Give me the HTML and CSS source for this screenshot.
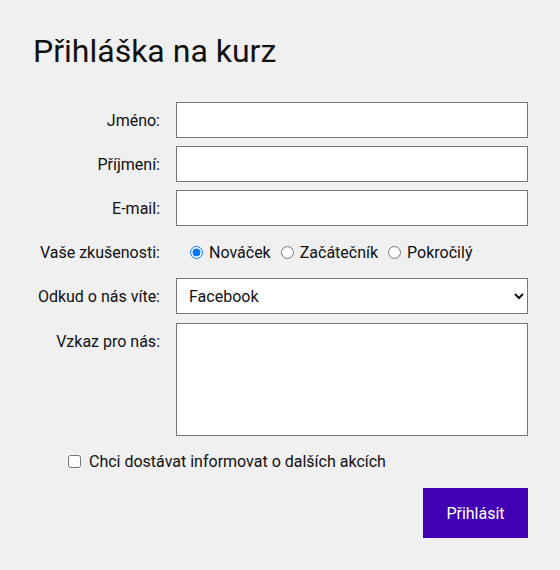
FILE: index.html
```html
<!DOCTYPE html>
<html lang="cs">
<head>
<meta charset="utf-8">
<title>Přihláška na kurz</title>
<link rel="stylesheet" href="styles.css">
</head>
<body>
<main class="page">
  <h1 class="title">Přihláška na kurz</h1>
  <form class="form">
    <div class="grid">
      <label class="label" for="jmeno">Jméno:</label>
      <input class="field" type="text" id="jmeno">
      <label class="label" for="prijmeni">Příjmení:</label>
      <input class="field" type="text" id="prijmeni">
      <label class="label" for="email">E-mail:</label>
      <input class="field" type="email" id="email">
      <span class="label">Vaše zkušenosti:</span>
      <div class="radios">
        <label class="radio"><input type="radio" name="zk" checked>Nováček</label>
        <label class="radio"><input type="radio" name="zk">Začátečník</label>
        <label class="radio"><input type="radio" name="zk">Pokročilý</label>
      </div>
      <label class="label" for="odkud">Odkud o nás víte:</label>
      <select class="field select" id="odkud">
        <option>Facebook</option>
        <option>Instagram</option>
        <option>Od známých</option>
      </select>
      <label class="label label-top" for="vzkaz">Vzkaz pro nás:</label>
      <textarea class="field area" id="vzkaz"></textarea>
    </div>
    <label class="check"><input type="checkbox">Chci dostávat informovat o dalších akcích</label>
    <div class="actions">
      <button class="submit" type="submit">Přihlásit</button>
    </div>
  </form>
</main>
</body>
</html>
```
FILE: styles.css
```css
html, body {
  margin: 0;
  padding: 0;
  background: #f0f0f0;
}
body {
  font-family: Roboto, "Liberation Sans", sans-serif;
  color: #111;
}
.page {
  padding: 32px;
}
.title {
  margin: 0 0 32px 1px;
  font-size: 32px;
  font-weight: 400;
  line-height: 38px;
}
.form {
  display: flex;
  flex-direction: column;
}
.grid {
  display: grid;
  grid-template-columns: 128px 352px;
  column-gap: 16px;
  row-gap: 8px;
  align-items: center;
}
.label {
  text-align: right;
  font-size: 16px;
}
.label-top {
  align-self: start;
  padding-top: 10px;
}
.field {
  box-sizing: border-box;
  width: 352px;
  height: 36px;
  margin: 0;
  border: 1px solid #767676;
  background: #fff;
  font-family: Roboto, "Liberation Sans", sans-serif;
  font-size: 16px;
  padding: 0 8px;
  border-radius: 0;
}
.select {
  padding-left: 8px;
  color: #111;
}
.area {
  height: 113px;
  resize: none;
  margin-top: 1px;
  display: block;
}
.radios {
  display: flex;
  align-items: center;
  gap: 10px;
  height: 36px;
  padding-left: 14px;
  font-size: 16px;
}
.radio {
  display: flex;
  align-items: center;
}
.radio input {
  margin: 0 6px 0 0;
  width: 13px;
  height: 13px;
}
.check {
  display: flex;
  align-items: center;
  margin: 16px 0 0 36px;
  font-size: 16px;
}
.check input {
  margin: 0 8px 0 0;
  width: 13px;
  height: 13px;
}
.actions {
  display: flex;
  justify-content: flex-end;
  margin-top: 17px;
}
.submit {
  width: 105px;
  height: 50px;
  border: none;
  border-radius: 0;
  background: #4200b4;
  color: #fff;
  font-family: Roboto, "Liberation Sans", sans-serif;
  font-size: 16px;
  padding: 0;
}
```
